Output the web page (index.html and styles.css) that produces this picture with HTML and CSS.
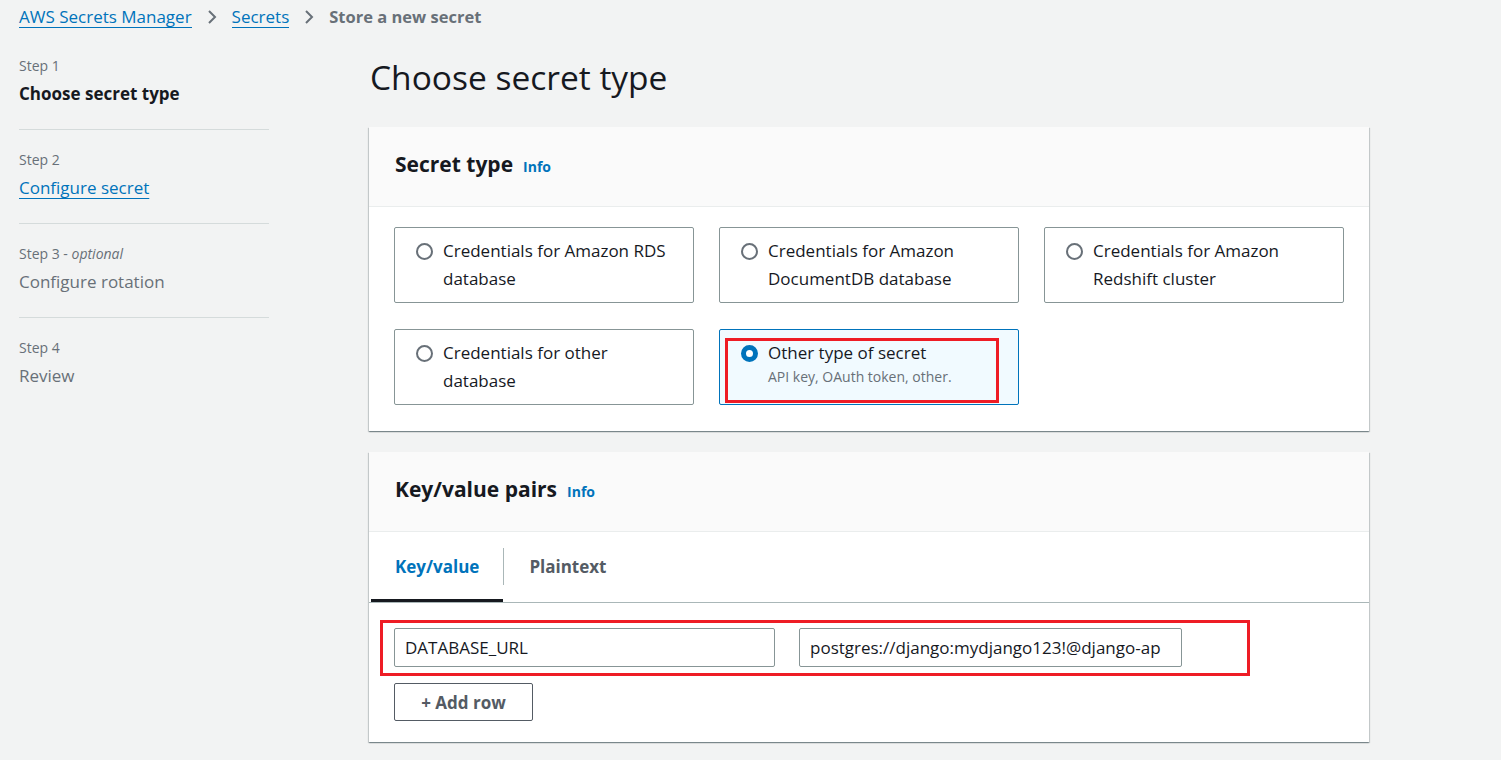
FILE: index.html
```html
<!DOCTYPE html>
<html lang="en">
<head>
<meta charset="utf-8">
<title>Store a new secret</title>
<link rel="stylesheet" href="styles.css">
</head>
<body>
<nav class="breadcrumbs">
  <a class="crumb-link" href="#">AWS Secrets Manager</a>
  <svg class="chev" viewBox="0 0 10 16" width="10" height="16"><polyline points="2,2 8,8 2,14" fill="none" stroke="#687078" stroke-width="2"/></svg>
  <a class="crumb-link" href="#">Secrets</a>
  <svg class="chev" viewBox="0 0 10 16" width="10" height="16"><polyline points="2,2 8,8 2,14" fill="none" stroke="#687078" stroke-width="2"/></svg>
  <span class="crumb-current">Store a new secret</span>
</nav>

<div class="layout">
  <ul class="steps">
    <li class="step">
      <div class="step-label">Step 1</div>
      <div class="step-title current">Choose secret type</div>
    </li>
    <li class="step">
      <div class="step-label">Step 2</div>
      <a class="step-title link" href="#">Configure secret</a>
    </li>
    <li class="step">
      <div class="step-label">Step 3 - <i>optional</i></div>
      <div class="step-title disabled">Configure rotation</div>
    </li>
    <li class="step last">
      <div class="step-label">Step 4</div>
      <div class="step-title disabled">Review</div>
    </li>
  </ul>

  <main class="main">
    <h1 class="page-title">Choose secret type</h1>

    <section class="card">
      <header class="card-header">
        <h2 class="card-title">Secret type</h2>
        <a class="info" href="#">Info</a>
      </header>
      <div class="card-body tiles">
        <label class="tile">
          <span class="radio"></span>
          <span class="tile-text">Credentials for Amazon RDS database</span>
        </label>
        <label class="tile">
          <span class="radio"></span>
          <span class="tile-text">Credentials for Amazon DocumentDB database</span>
        </label>
        <label class="tile">
          <span class="radio"></span>
          <span class="tile-text">Credentials for Amazon Redshift cluster</span>
        </label>
        <label class="tile">
          <span class="radio"></span>
          <span class="tile-text">Credentials for other database</span>
        </label>
        <label class="tile selected">
          <span class="radio checked"></span>
          <span class="tile-text">Other type of secret<span class="tile-desc">API key, OAuth token, other.</span></span>
          <span class="annot annot-tile"></span>
        </label>
      </div>
    </section>

    <section class="card card-kv">
      <header class="card-header">
        <h2 class="card-title">Key/value pairs</h2>
        <a class="info" href="#">Info</a>
      </header>
      <div class="tabs">
        <div class="tab active">Key/value</div>
        <div class="tab-sep"></div>
        <div class="tab">Plaintext</div>
      </div>
      <div class="kv-body">
        <div class="kv-row">
          <input class="field key" type="text" value="DATABASE_URL">
          <input class="field value" type="text" value="postgres://django:mydjango123!@django-ap">
          <span class="annot annot-row"></span>
        </div>
        <button class="btn">+ Add row</button>
      </div>
    </section>
  </main>
</div>
</body>
</html>
```

FILE: styles.css
```css
* { box-sizing: border-box; }

body {
  margin: 0;
  background: #f2f3f3;
  font-family: "Open Sans", "Noto Sans", sans-serif;
  color: #16191f;
  font-size: 16px;
}

a { text-decoration: none; }

.breadcrumbs {
  display: flex;
  align-items: center;
  padding: 5px 0 0 19px;
  height: 29px;
  font-size: 17px;
  line-height: 24px;
}

.crumb-link {
  color: #0073bb;
  border-bottom: 1px solid #0073bb;
  line-height: 21px;
}

.chev { margin: 0 15px 0 15px; }

.crumb-current {
  color: #687078;
  font-weight: 700;
  font-size: 16.5px;
}

.layout {
  display: flex;
  padding-left: 19px;
  gap: 100px;
}

.steps {
  list-style: none;
  margin: 27px 0 0;
  padding: 0;
  width: 250px;
  flex: none;
}

.step {
  padding: 20px 0 23px;
  border-bottom: 1px solid #d5dbdb;
}
.step:first-child { padding-top: 0; }
.step.last { border-bottom: none; }

.step-label {
  font-size: 14px;
  line-height: 20px;
  color: #687078;
  margin-bottom: 6px;
}

.step-title {
  display: inline-block;
  font-size: 17px;
  line-height: 24px;
}
.step-title.current { font-weight: 700; color: #16191f; }
.step-title.link { color: #0073bb; text-decoration: underline; text-underline-offset: 4px; text-decoration-thickness: 1px; }
.step-title.disabled { color: #687078; }

.main {
  width: 1000px;
  flex: none;
}

.page-title {
  margin: 28px 0 30px 1px;
  font-size: 33.5px;
  line-height: 40px;
  font-weight: 400;
  color: #16191f;
}

.card {
  background: #fff;
  box-shadow: 0 1px 1px 0 rgba(0, 28, 36, 0.3), 1px 1px 1px 0 rgba(0, 28, 36, 0.15), -1px 1px 1px 0 rgba(0, 28, 36, 0.15);
  margin-bottom: 21px;
}

.card-header {
  display: flex;
  align-items: baseline;
  gap: 10px;
  background: #fafafa;
  border-bottom: 1px solid #eaeded;
  padding: 23px 25px 28px 26px;
}

.card-title {
  margin: 0;
  font-size: 21px;
  line-height: 28px;
  font-weight: 700;
}

.info {
  color: #0073bb;
  font-size: 14px;
  font-weight: 700;
}

.tiles {
  display: grid;
  grid-template-columns: repeat(3, 300px);
  column-gap: 25px;
  row-gap: 26px;
  padding: 20px 25px 26px;
}

.tile {
  position: relative;
  display: flex;
  align-items: flex-start;
  gap: 10px;
  min-height: 76px;
  padding: 9px 20px 9px 21px;
  border: 1px solid #879596;
  border-radius: 2px;
  font-size: 17px;
  line-height: 28px;
  color: #16191f;
}

.tile.selected {
  border-color: #0073bb;
  background: #f1faff;
}

.radio {
  flex: none;
  width: 17px;
  height: 17px;
  margin-top: 6px;
  border: 2px solid #687078;
  border-radius: 50%;
  background: #fff;
}

.radio.checked {
  border: 5px solid #0073bb;
  background: #fff;
}

.tile-text { display: block; }

.tile-desc {
  display: block;
  font-size: 14px;
  line-height: 20px;
  color: #687078;
}

.annot {
  position: absolute;
  border: 3px solid #ee1c25;
  pointer-events: none;
}

.annot-tile {
  left: 5px;
  top: 8px;
  width: 274px;
  height: 65px;
}

.tabs {
  display: flex;
  align-items: center;
  height: 71px;
  padding-left: 2px;
  border-bottom: 1px solid #aab7b8;
}

.tab {
  height: 100%;
  display: flex;
  align-items: center;
  padding: 0 26px 2px 25px;
  font-size: 17px;
  font-weight: 700;
  color: #545b64;
}

.tab.active {
  color: #0073bb;
  padding: 0 24px 2px 24px;
  box-shadow: inset 0 -3px 0 #16191f;
}

.tab-sep {
  width: 1px;
  height: 37px;
  margin-bottom: 2px;
  background: #aab7b8;
}

.kv-body {
  padding: 25px 25px 21px;
}

.kv-row {
  position: relative;
  display: flex;
  gap: 24px;
  margin-bottom: 16px;
}

.field {
  height: 39px;
  padding: 0 10px;
  border: 1px solid #879596;
  border-radius: 2px;
  font-family: inherit;
  font-size: 17px;
  color: #16191f;
  background: #fff;
}

.field.key { width: 381px; }
.field.value { width: 383px; }

.annot-row {
  left: -14px;
  top: -8px;
  width: 870px;
  height: 56px;
}

.btn {
  width: 139px;
  height: 38px;
  border: 1px solid #545b64;
  border-radius: 2px;
  background: #fff;
  font-family: inherit;
  font-size: 17px;
  font-weight: 700;
  color: #545b64;
}
```
